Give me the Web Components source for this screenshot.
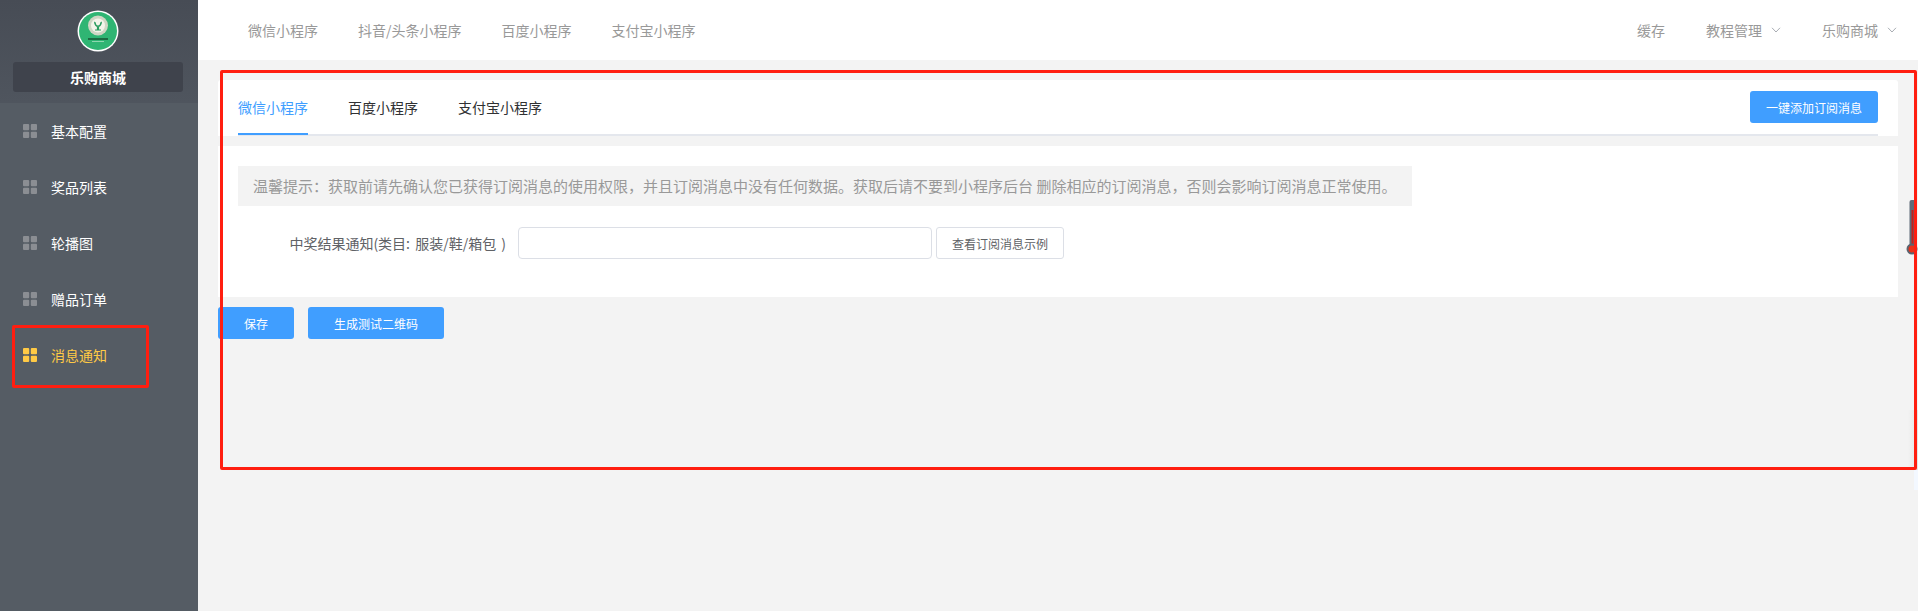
<!DOCTYPE html>
<html lang="zh-CN">
  <head>
    <meta charset="UTF-8" />
    <title>消息通知</title>
    <style>
      html, body { margin: 0; height: 100%; overflow: hidden; }
      body {
        font-family: "Noto Sans CJK SC", "Liberation Sans", sans-serif;
        font-size: 14px;
        background: #f3f3f3;
      }
    </style>
  </head>
  <body>
    <admin-page>
      <side-menu slot="side" title-text="乐购商城">
        <menu-item>基本配置</menu-item>
        <menu-item>奖品列表</menu-item>
        <menu-item>轮播图</menu-item>
        <menu-item>赠品订单</menu-item>
        <menu-item active>消息通知</menu-item>
      </side-menu>
      <top-bar slot="top"></top-bar>
      <tab-card></tab-card>
      <form-card></form-card>
      <action-row></action-row>
    </admin-page>

    <script>
      const grid = `<svg width="14" height="14" viewBox="0 0 14 14"><g fill="currentColor">
        <rect width="6.2" height="6.2" rx="1"/><rect x="7.8" width="6.2" height="6.2" rx="1"/>
        <rect y="7.8" width="6.2" height="6.2" rx="1"/><rect x="7.8" y="7.8" width="6.2" height="6.2" rx="1"/></g></svg>`
      const chevron = `<svg width="10" height="6" viewBox="0 0 10 6"><path d="M1 .8 5 5l4-4.200" fill="none" stroke="#a8adb3" stroke-width="1"/></svg>`

      function shadow(el, html) {
        el.attachShadow({ mode: 'open' }).innerHTML = html
      }

      customElements.define('admin-page', class extends HTMLElement {
        constructor() {
          super()
          shadow(this, `<style>
            :host { display: grid; grid-template-columns: 198px 1fr; grid-template-rows: 60px 1fr; width: 1918px; height: 611px; position: relative; overflow: hidden; }
            .side { grid-row: 1 / 3; display: flex; }
            .main { padding: 20px 20px 0; display: flex; flex-direction: column; }
            .mark { position: absolute; border: 3px solid #ff1e10; border-radius: 2px; box-sizing: border-box; pointer-events: none; }
            .big { left: 220px; top: 70px; width: 1697px; height: 400px; }
            .small { left: 12px; top: 325px; width: 137px; height: 63px; }
            .thermo { position: absolute; left: 1906px; top: 200px; }
            .edge { position: absolute; left: 1914px; top: 470px; width: 4px; height: 20px; background: #f3f8ff; }
            .edge-shade { position: absolute; left: 1908px; top: 410px; width: 10px; height: 60px; background: linear-gradient(to right, #f3f3f3, #e3e3e3); }
          </style>
          <div class="side"><slot name="side"></slot></div>
          <slot name="top"></slot>
          <div class="main"><slot></slot></div>
          <div class="edge-shade"></div>
          <div class="edge"></div>
          <svg class="thermo" width="12" height="56" viewBox="0 0 12 56">
            <rect x="3.500" y="0" width="6" height="48" rx="2" fill="#5f6b78"/>
            <rect x="5.500" y="10" width="2" height="38" fill="#c4201a"/>
            <circle cx="6" cy="49" r="5.500" fill="#5a6470"/>
            <circle cx="6" cy="49" r="3.500" fill="#e8321a"/>
          </svg>
          <div class="mark big"></div>
          <div class="mark small"></div>`)
        }
      })

      customElements.define('side-menu', class extends HTMLElement {
        constructor() {
          super()
          shadow(this, `<style>
            :host { display: flex; flex-direction: column; width: 198px; background: #555c64; }
            .brand { height: 103px; box-sizing: border-box; background: linear-gradient(#474c55, #4f555e); display: flex; flex-direction: column; align-items: center; padding: 10px 2px 0 0; }
            .logo { display: block; }
            .name { margin-top: 10px; width: 170px; height: 30px; line-height: 30px; text-align: center; background: #3f434c; border-radius: 3px; color: #fff; font-size: 14px; font-weight: 700; }
            nav { display: flex; flex-direction: column; }
          </style>
          <div class="brand">
            <svg class="logo" width="42" height="42" viewBox="0 0 42 42">
              <circle cx="21" cy="21" r="20.500" fill="#fff"/>
              <circle cx="21" cy="21" r="19" fill="#2fb573"/>
              <circle cx="21" cy="15.500" r="10" fill="#cfd6c4"/>
              <circle cx="21" cy="15.500" r="7" fill="#f4f4ea"/>
              <path d="M17 11.500c0 3.500 1.700 5.500 4 5.500s4-2 4-5.500l-1.800 1c0 1.800-.9 3-2.200 3s-2.200-1.200-2.200-3zM19.900 17v2.500h-1.900v1.100h6v-1.100h-1.900V17z" fill="#2a9c5f"/>
              <rect x="11" y="28" width="20" height="2" fill="#1c6b42"/>
              <rect x="15" y="31" width="12" height="1" fill="#8fd6b0"/>
            </svg>
            <div class="name">${this.getAttribute('title-text')}</div>
          </div>
          <nav><slot></slot></nav>`)
        }
      })

      customElements.define('menu-item', class extends HTMLElement {
        constructor() {
          super()
          const on = this.hasAttribute('active')
          shadow(this, `<style>
            :host { display: flex; align-items: center; gap: 14px; height: 56px; padding-left: 23px; font-size: 14px; color: ${on ? '#ffca45' : '#fff'}; }
            span { display: flex; color: ${on ? '#ffca45' : '#8b8e93'}; }
          </style><span>${grid}</span><slot></slot>`)
        }
      })

      customElements.define('top-bar', class extends HTMLElement {
        constructor() {
          super()
          shadow(this, `<style>
            :host { display: flex; align-items: center; height: 60px; background: #fff; color: #999; font-size: 14px; padding: 0 21px 0 50px; }
            .left, .right { display: flex; align-items: center; }
            .left { gap: 40px; }
            .right { margin-left: auto; gap: 41px; }
            .drop { display: flex; align-items: center; gap: 9px; }
          </style>
          <div class="left"><span>微信小程序</span><span>抖音/头条小程序</span><span>百度小程序</span><span>支付宝小程序</span></div>
          <div class="right"><span>缓存</span><span class="drop">教程管理 ${chevron}</span><span class="drop">乐购商城 ${chevron}</span></div>`)
        }
      })

      customElements.define('tab-card', class extends HTMLElement {
        constructor() {
          super()
          shadow(this, `<style>
            :host { display: block; height: 56px; background: #fff; border-radius: 3px 3px 0 0; padding: 0 20px; }
            .tabs { display: flex; align-items: center; gap: 40px; height: 56px; box-sizing: border-box; border-bottom: 2px solid #e4e7ed; color: #303133; font-size: 14px; }
            .tab { height: 56px; box-sizing: border-box; padding-top: 17px; line-height: 22px; }
            .on { color: #409eff; border-bottom: 2px solid #409eff; }
            button { margin-left: auto; width: 128px; height: 32px; border: 0; border-radius: 3px; background: #409eff; color: #fff; font: 12px "Noto Sans CJK SC", sans-serif; }
          </style>
          <div class="tabs">
            <div class="tab on">微信小程序</div><div class="tab">百度小程序</div><div class="tab">支付宝小程序</div>
            <button>一键添加订阅消息</button>
          </div>`)
        }
      })

      customElements.define('form-card', class extends HTMLElement {
        constructor() {
          super()
          shadow(this, `<style>
            :host { display: block; margin-top: 10px; height: 151px; box-sizing: border-box; background: #fff; padding: 20px; }
            .tip { width: 1174px; height: 40px; line-height: 40px; box-sizing: border-box; padding-left: 15px; background: #f3f3f3; color: #999; font-size: 15px; white-space: nowrap; }
            /* centred colon and comma, the SC glyphs sit in the corner */
            .tip i { font-style: normal; font-family: "Noto Sans CJK TC", sans-serif; }
            .row { display: flex; align-items: center; margin-top: 21px; }
            label { width: 280px; padding-right: 12px; box-sizing: border-box; text-align: right; color: #606266; font-size: 14px; word-spacing: 2px; white-space: nowrap; }
            input { width: 414px; height: 32px; box-sizing: border-box; border: 1px solid #dcdfe6; border-radius: 4px; outline: 0; }
            button { margin-left: 4px; width: 128px; height: 32px; background: #fff; border: 1px solid #dcdfe6; border-radius: 3px; color: #606266; font: 12px "Noto Sans CJK SC", sans-serif; }
          </style>
          <div class="tip">温馨提示<i>：</i>获取前请先确认您已获得订阅消息的使用权限<i>，</i>并且订阅消息中没有任何数据。获取后请不要到小程序后台 删除相应的订阅消息<i>，</i>否则会影响订阅消息正常使用。</div>
          <div class="row"><label>中奖结果通知(类目: 服装/鞋/箱包 )</label><input /><button>查看订阅消息示例</button></div>`)
        }
      })

      customElements.define('action-row', class extends HTMLElement {
        constructor() {
          super()
          shadow(this, `<style>
            :host { display: flex; gap: 14px; margin-top: 10px; }
            button { height: 32px; border: 0; border-radius: 3px; background: #409eff; color: #fff; font: 12px "Noto Sans CJK SC", sans-serif; }
            .a { width: 76px; } .b { width: 136px; }
          </style><button class="a">保存</button><button class="b">生成测试二维码</button>`)
        }
      })
    </script>
  </body>
</html>
